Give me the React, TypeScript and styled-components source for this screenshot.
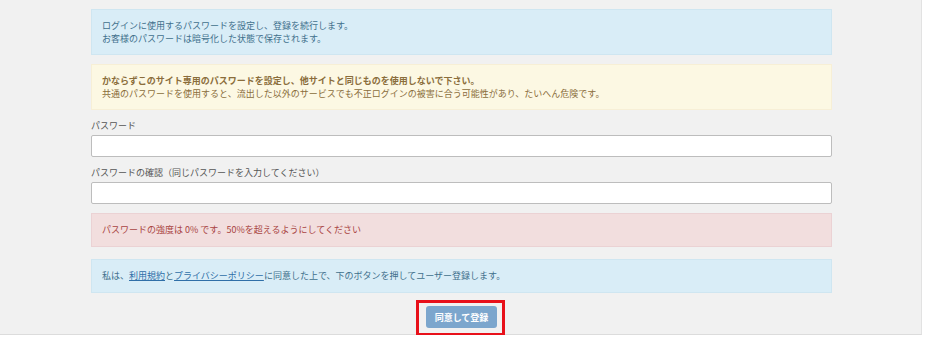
import styled, { createGlobalStyle } from "styled-components";

const GlobalStyle = createGlobalStyle`
  html, body {
    margin: 0;
    padding: 0;
    background: #ffffff;
  }
  body {
    font-family: "Noto Sans CJK JP", "Noto Sans", sans-serif;
    font-size: 9px;
    line-height: 13px;
  }
`;

type Tone = "info" | "warning" | "danger";

const tones: Record<Tone, { bg: string; border: string; color: string }> = {
  info: { bg: "#d9edf7", border: "#cfe6f1", color: "#41708c" },
  warning: { bg: "#fcf8e3", border: "#f7efd6", color: "#8a6d3b" },
  danger: { bg: "#f2dede", border: "#ebd2d4", color: "#a94442" },
};

export default function App() {
  return (
    <>
      <GlobalStyle />
      <Panel>
        <Column>
          <Alert tone="info">
            ログインに使用するパスワードを設定し、登録を続行します。
            <br />
            お客様のパスワードは暗号化した状態で保存されます。
          </Alert>
          <Alert tone="warning" $gap={9}>
            <strong>かならずこのサイト専用のパスワードを設定し、他サイトと同じものを使用しないで下さい。</strong>
            <br />
            共通のパスワードを使用すると、流出した以外のサービスでも不正ログインの被害に合う可能性があり、たいへん危険です。
          </Alert>

          <Field>
            <Label>パスワード</Label>
            <Input type="password" />
          </Field>
          <Field>
            <Label>パスワードの確認（同じパスワードを入力してください）</Label>
            <Input type="password" />
          </Field>

          <Alert tone="danger" $gap={9} $single>
            パスワードの強度は 0% です。50%を超えるようにしてください
          </Alert>
          <Alert tone="info" $gap={12} $single>
            私は、<TextLink href="#">利用規約</TextLink>と
            <TextLink href="#">プライバシーポリシー</TextLink>
            に同意した上で、下のボタンを押してユーザー登録します。
          </Alert>

          <Actions>
            <Highlight>
              <SubmitButton disabled>同意して登録</SubmitButton>
            </Highlight>
          </Actions>
        </Column>
      </Panel>
    </>
  );
}

function Alert({
  tone,
  children,
  $gap = 0,
  $single = false,
}: {
  tone: Tone;
  children: React.ReactNode;
  $gap?: number;
  $single?: boolean;
}) {
  return (
    <AlertBox $tone={tone} $gap={$gap} $single={$single}>
      {children}
    </AlertBox>
  );
}

const Panel = styled.div`
  width: 922px;
  height: 335px;
  box-sizing: border-box;
  background: #f1f1f1;
  border-right: 1px solid #e2e2e2;
  border-bottom: 1px solid #dcdcdc;
  padding-top: 9px;
`;

const Column = styled.div`
  width: 741px;
  margin-left: 91px;
  display: flex;
  flex-direction: column;
`;

const AlertBox = styled.div<{ $tone: Tone; $gap: number; $single: boolean }>`
  margin-top: ${(p) => p.$gap}px;
  background: ${(p) => tones[p.$tone].bg};
  border: 1px solid ${(p) => tones[p.$tone].border};
  color: ${(p) => tones[p.$tone].color};
  padding: ${(p) => (p.$single ? "9px 10px 10px" : "9px 10px 9px")};
  strong {
    font-weight: 700;
  }
`;

const Field = styled.div`
  display: flex;
  flex-direction: column;
  margin-top: 9px;
  gap: 3px;
`;

const Label = styled.label`
  color: #555555;
  line-height: 13px;
`;

const Input = styled.input`
  box-sizing: border-box;
  height: 22px;
  width: 100%;
  margin: 0;
  border: 1px solid #bdbdbd;
  border-radius: 2px;
  background: #ffffff;
  padding: 0 6px;
  font: inherit;
`;

const TextLink = styled.a`
  color: #2f6fa8;
  text-decoration: underline;
`;

const Actions = styled.div`
  display: flex;
  justify-content: center;
  margin-top: 7px;
  padding-right: 2px;
`;

const Highlight = styled.div`
  border: 3px solid #e8101a;
  padding: 3px 5px 5px 7px;
  display: flex;
`;

const SubmitButton = styled.button`
  width: 71px;
  height: 22px;
  border: none;
  border-radius: 3px;
  background: #7ca6cd;
  color: #ffffff;
  font-family: inherit;
  font-size: 9px;
  font-weight: 700;
  padding: 0;
  cursor: not-allowed;
`;
